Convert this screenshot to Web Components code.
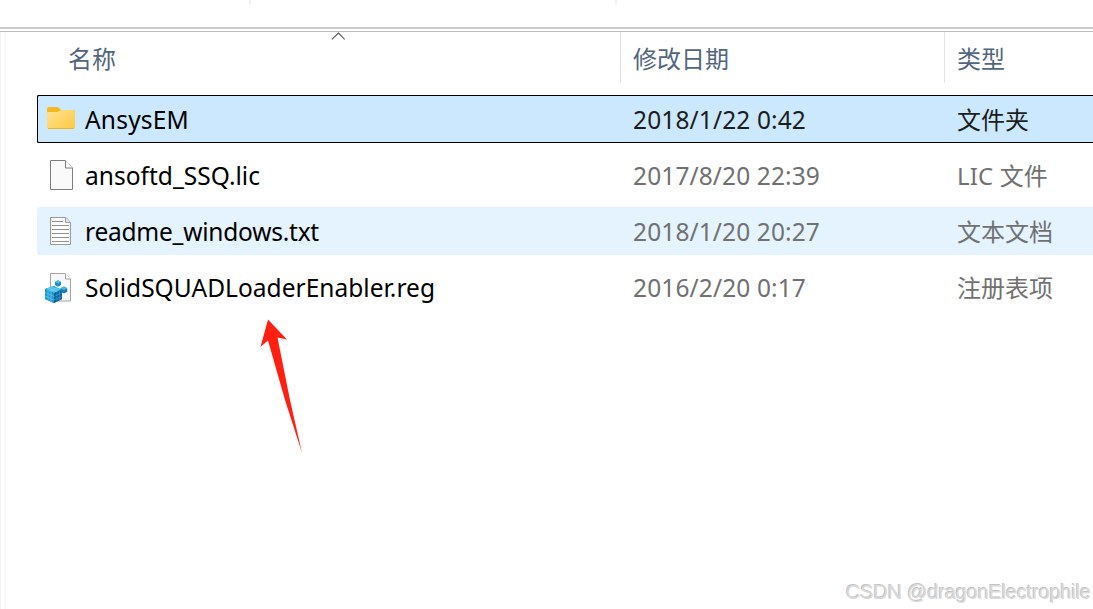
<!DOCTYPE html>
<html lang="zh-CN">
<head>
<meta charset="utf-8">
<title>AnsysEM</title>
<style>
  html, body { margin: 0; height: 100%; overflow: hidden; background: #fff; }
  body {
    font: 24px/32px "Noto Sans", "Noto Sans CJK SC", sans-serif;
    color: #000;
  }
</style>
</head>
<body>
<file-explorer>
  <column-header slot="header">
    <fit-text width="48">名称</fit-text>
    <fit-text slot="date" width="96">修改日期</fit-text>
    <fit-text slot="type" width="48">类型</fit-text>
  </column-header>
  <file-row state="selected">
    <file-icon slot="icon" kind="folder"></file-icon>
    <fit-text width="104">AnsysEM</fit-text>
    <fit-text slot="date" width="173">2018/1/22 0:42</fit-text>
    <fit-text slot="type" width="72">文件夹</fit-text>
  </file-row>
  <file-row>
    <file-icon slot="icon" kind="blank"></file-icon>
    <fit-text width="175">ansoftd_SSQ.lic</fit-text>
    <fit-text slot="date" width="187">2017/8/20 22:39</fit-text>
    <fit-text slot="type" width="91">LIC 文件</fit-text>
  </file-row>
  <file-row state="hover">
    <file-icon slot="icon" kind="text"></file-icon>
    <fit-text width="234">readme_windows.txt</fit-text>
    <fit-text slot="date" width="187">2018/1/20 20:27</fit-text>
    <fit-text slot="type" width="96">文本文档</fit-text>
  </file-row>
  <file-row>
    <file-icon slot="icon" kind="registry"></file-icon>
    <fit-text width="350">SolidSQUADLoaderEnabler.reg</fit-text>
    <fit-text slot="date" width="173">2016/2/20 0:17</fit-text>
    <fit-text slot="type" width="96">注册表项</fit-text>
  </file-row>
  <arrow-mark slot="overlay"></arrow-mark>
  <water-mark slot="overlay"><fit-text width="245">CSDN @dragonElectrophile</fit-text></water-mark>
</file-explorer>

<script>
function attach(el, html) {
  const root = el.attachShadow({ mode: "open" });
  root.innerHTML = html;
  return root;
}

// Single line of text, tracked so that it takes up exactly `width` pixels
class FitText extends HTMLElement {
  connectedCallback() {
    const root = attach(this, `
      <style>
        :host { display: inline-block; white-space: nowrap; }
        span { display: inline-block; }
      </style>
      <span><slot></slot></span>
    `);
    const span = root.querySelector("span");
    const gap = this.getAttribute("width") - span.getBoundingClientRect().width;
    span.style.letterSpacing = `${gap / this.textContent.length}px`;
  }
}

class FileExplorer extends HTMLElement {
  constructor() {
    super();
    attach(this, `
      <style>
        :host {
          display: flex;
          flex-direction: column;
          position: relative;
          height: 100vh;
          overflow: hidden;
        }
        .toolbar {
          display: flex;
          height: 27px;
          flex: none;
          padding-left: 249px;
          gap: 364px;
          background: #fff;
        }
        .toolbar i { width: 2px; height: 4px; background: #f0f0f0; }
        .rule { flex: none; height: 2px; border-top: 2px solid #cbc9ca; border-bottom: 1px solid #bdbbbc; }
        .body { display: flex; flex: 1; min-height: 0; }
        .pane { flex: none; width: 3px; border-left: 1px solid #f0f0f0; border-right: 2px solid #f8f8f8; }
        .list {
          flex: 1;
          display: flex;
          flex-direction: column;
          gap: 8px;
          padding-left: 31px;
        }
      </style>
      <div class="toolbar"><i></i><i></i></div>
      <div class="rule"></div>
      <div class="body">
        <div class="pane"></div>
        <div class="list"><slot name="header"></slot><slot></slot></div>
      </div>
      <slot name="overlay"></slot>
    `);
  }
}

class ColumnHeader extends HTMLElement {
  constructor() {
    super();
    attach(this, `
      <style>
        :host {
          display: grid;
          grid-template-columns: 583px 324px 1fr;
          height: 51px;
          margin-bottom: 4px;
          color: #52667f;
        }
        div { padding: 11px 0 0 12px; border-left: 1px solid #e2e2e2; box-sizing: border-box; }
        .name { display: flex; border: 0; padding-left: 31px; }
        svg { width: 14px; height: 8px; margin: -11px 0 0 178px; padding-left: 37px; }
      </style>
      <div class="name">
        <slot></slot>
        <svg viewBox="0 0 14 8"><path d="M.8 7.400 7.500 1l6.200 6.400" fill="none" stroke="#555" stroke-width="1.100"/></svg>
      </div>
      <div><slot name="date"></slot></div>
      <div><slot name="type"></slot></div>
    `);
  }
}

class FileRow extends HTMLElement {
  constructor() {
    super();
    attach(this, `
      <style>
        :host {
          display: grid;
          grid-template-columns: 48px 548px 324px 1fr;
          align-items: center;
          box-sizing: border-box;
          height: 48px;
          flex: none;
          border-radius: 2px 0 0 2px;
          --meta: #717171;
        }
        :host([state="selected"]) {
          background: #cce8ff;
          box-shadow: inset 1px 0 #000, inset 0 1px #000, inset 0 -1px #000;
          --meta: #1c1c1c;
        }
        :host([state="hover"]) { background: #e5f3ff; }
        div { padding-top: 2px; }
        .name, .date { font-size: 24.5px; }
        .date, .type { color: var(--meta); }
      </style>
      <slot name="icon"></slot>
      <div class="name"><slot></slot></div>
      <div class="date"><slot name="date"></slot></div>
      <div class="type"><slot name="type"></slot></div>
    `);
  }
}

// All icons share a 48x48 box, the height of a row
const icons = {
  folder: `
    <defs><linearGradient id="g" x1="0" y1="0" x2="1" y2="1">
      <stop offset="0" stop-color="#ffe293"/><stop offset="1" stop-color="#ffc93f"/>
    </linearGradient></defs>
    <path d="M10 14q0-2 2-2h8q1 0 2 1l2 2h12q2 0 2 2v5H10z" fill="#f5b81f"/>
    <path d="M10 18q0-1 1-1h9q1 0 2-1l1-.500q1-.500 2-.500h11q2 0 2 2v15q0 2-2 2H12q-2 0-2-2z" fill="url(#g)"/>
    <path d="M11 33.500h26" stroke="#eeb62f"/>`,
  blank: `
    <path d="M13.500 9.500H28l7.500 7.500v21.500h-22z" fill="#fafafa" stroke="#7d7d7d"/>
    <path d="M28.500 9.500v7.500h7" fill="#fff" stroke="#7d7d7d"/>`,
  text: `
    <path d="M13.500 10.500H29l4.500 5v22h-20z" fill="#fbfbfb" stroke="#9b9b9b"/>
    <path d="M28.500 10.500v5h5" fill="#e7e7e7" stroke="#9b9b9b"/>
    <path d="M15 14.500h11M15 18.500h17M15 22.500h17M15 26.500h17M15 30.500h17M15 34.500h17" stroke="#929292"/>`,
  registry: `
    <path d="M13.500 10.500H28l5.500 5.500v22h-20z" fill="#f7f7f7" stroke="#a3a3a3"/>
    <path d="M28.500 10.500v5.500h5" fill="#fff" stroke="#a3a3a3"/>
    <path d="m8 26 9-3 8 4v9l-8 4-9-4z" fill="#1685bd"/>
    <path d="m8 26 7-2.500 9.500 2.500-7.500 4z" fill="#4cc5ef"/>
    <path d="M17 30v10l-9-4V26z" fill="#1f98d0"/>
    <path d="m17 30 8-3v9l-8 4z" fill="#0b6399"/>
    <path d="m8 29.500 9 4M8 33l9 4M11 27v10.500M14 28.500v10.500M11 25l9 3.500M12 28.500l8-4" fill="none" stroke="#7bd2f2" stroke-width=".6"/>
    <path d="m17 33.500 8-3.500M17 37l8-3.500M20 29v9.500M22.500 28v9.500" stroke="#3b9fd0" stroke-width=".6"/>
    <path d="m18 19 3-1.800 3 1.800v3l-3 1.800-3-1.800z" fill="#168fc9"/>
    <path d="m18 19 3-1.800 3 1.800-3 1.600z" fill="#4bbfe8"/>
    <path d="m23.500 25.300 3.500-1.800 3.200 1.800v3.400L27 30.500l-3.500-1.800z" fill="#137fba"/>
    <path d="m23.500 25.300 3.500-1.800 3.200 1.800-3.200 1.700z" fill="#48bce6"/>`,
};

class FileIcon extends HTMLElement {
  connectedCallback() {
    attach(this, `
      <style>
        :host { display: block; width: 48px; height: 48px; }
        svg { display: block; }
      </style>
      <svg width="48" height="48" viewBox="0 0 48 48">${icons[this.getAttribute("kind")]}</svg>
    `);
  }
}

// Red arrow drawn over the list, pointing at the .reg file
class ArrowMark extends HTMLElement {
  constructor() {
    super();
    attach(this, `
      <style>
        :host { position: absolute; left: 260px; top: 319px; }
        svg { display: block; }
      </style>
      <svg width="44" height="136" viewBox="0 0 44 136">
        <path d="M8 .5 27 20.500 17.500 18.500 30 81 42 134 25 81 8 21.500.5 28z" fill="#ff2012"/>
      </svg>
    `);
  }
}

class WaterMark extends HTMLElement {
  constructor() {
    super();
    attach(this, `
      <style>
        :host {
          position: absolute;
          right: 2px;
          bottom: 5px;
          font: 20px/24px "Liberation Sans", sans-serif;
          color: #dadada;
          text-shadow: -1px -1px 0 #c4c4c4;
        }
      </style>
      <slot></slot>
    `);
  }
}

customElements.define("file-explorer", FileExplorer);
customElements.define("column-header", ColumnHeader);
customElements.define("file-row", FileRow);
customElements.define("file-icon", FileIcon);
customElements.define("arrow-mark", ArrowMark);
customElements.define("water-mark", WaterMark);
customElements.define("fit-text", FitText);
</script>
</body>
</html>
